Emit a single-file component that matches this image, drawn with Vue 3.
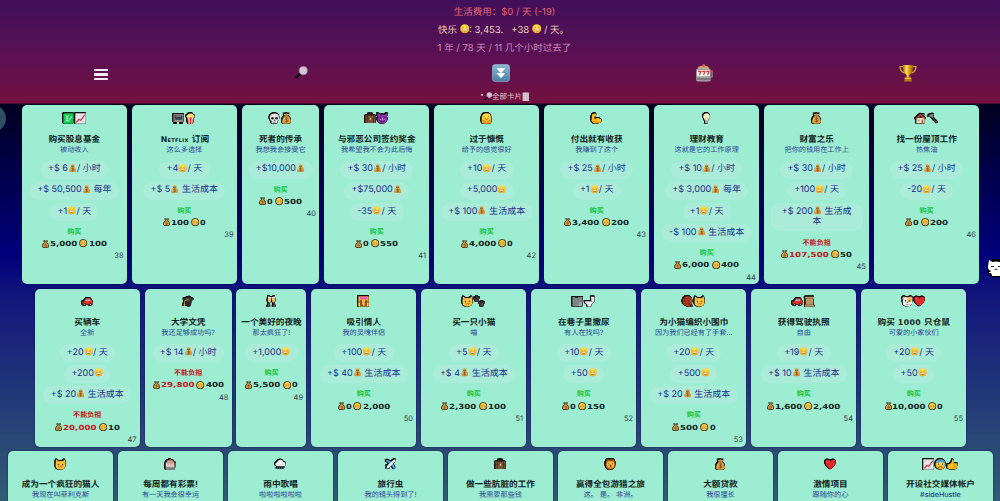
<script setup>
const B = '{bag}'
const S = '{smile}'

const rows = [
  [
    { n: 38, icons: ['yen', 'chart'], title: '购买股息基金', sub: '被动收入', fx: [`+$ 6${B}/ 小时`, `+$ 50,500${B} 每年`, `+1${S}/ 天`], cash: '5,000', joy: '100' },
    { n: 39, icons: ['tv', 'popcorn'], title: 'Netflix 订阅', sub: '这么多选择', fx: [`+4${S}/ 天`, `+$ 5${B} 生活成本`], cash: '100', joy: '0' },
    { n: 40, w: 77.7, icons: ['skull', 'bag'], title: '死者的传承', sub: '我想我会接受它', fx: [`+$10,000${B}`], cash: '0', joy: '500' },
    { n: 41, icons: ['briefcase', 'devil'], title: '与邪恶公司签约奖金', sub: '我希望我不会为此后悔', fx: [`+$ 30${B}/ 小时`, `+$75,000${B}`, `-35${S}/ 天`], cash: '0', joy: '550' },
    { n: 42, icons: ['hug'], title: '过于慷慨', sub: '给予的感觉很好', fx: [`+10${S}/ 天`, `+5,000${S}`, `+$ 100${B} 生活成本`], cash: '4,000', joy: '0' },
    { n: 43, icons: ['muscle'], title: '付出就有收获', sub: '我赚到了这个', fx: [`+$ 25${B}/ 小时`, `+1${S}/ 天`], cash: '3,400', joy: '200' },
    { n: 44, icons: ['bulb'], title: '理财教育', sub: '这就是它的工作原理', fx: [`+$ 10${B}/ 小时`, `+$ 3,000${B} 每年`, `+1${S}/ 天`, `-$ 100${B} 生活成本`], cash: '6,000', joy: '400' },
    { n: 45, icons: ['bag'], title: '财富之乐', sub: '把你的钱用在工作上', fx: [`+$ 30${B}/ 小时`, `+100${S}/ 天`, `+$ 200${B} 生活成\n本`], cash: '107,500', joy: '50', poor: true },
    { n: 46, icons: ['house', 'hammer'], title: '找一份屋顶工作', sub: '热焦油', fx: [`+$ 25${B}/ 小时`, `-20${S}/ 天`], cash: '0', joy: '200' }
  ],
  [
    { n: 47, icons: ['car'], title: '买辆车', sub: '全新', fx: [`+20${S}/ 天`, `+200${S}`, `+$ 20${B} 生活成本`], cash: '20,000', joy: '10', poor: true },
    { n: 48, w: 87.2, icons: ['gradcap'], title: '大学文凭', sub: '我还足够成功吗?', fx: [`+$ 14${B}/ 小时`], cash: '29,800', joy: '400', poor: true },
    { n: 49, w: 70, icons: ['glasses'], title: '一个美好的夜晚', sub: '那太疯狂了!', fx: [`+1,000${S}`], cash: '5,500', joy: '0' },
    { n: 50, icons: ['couple'], title: '吸引情人', sub: '我的灵魂伴侣', fx: [`+100${S}/ 天`, `+$ 40${B} 生活成本`], cash: '0', joy: '2,000' },
    { n: 51, icons: ['cat', 'paws'], title: '买一只小猫', sub: '喵', fx: [`+5${S}/ 天`, `+$ 4${B} 生活成本`], cash: '2,300', joy: '100' },
    { n: 52, icons: ['alley', 'toilet'], title: '在巷子里撒尿', sub: '有人在找吗?', fx: [`+10${S}/ 天`, `+50${S}`], cash: '0', joy: '150' },
    { n: 53, icons: ['yarn', 'cat'], title: '为小猫编织小围巾', sub: '因为我们已经有了手套...', fx: [`+20${S}/ 天`, `+500${S}`, `+$ 20${B} 生活成本`], cash: '500', joy: '0' },
    { n: 54, icons: ['car', 'scroll'], title: '获得驾驶执照', sub: '自由', fx: [`+19${S}/ 天`, `+$ 10${B} 生活成本`], cash: '1,600', joy: '2,400' },
    { n: 55, icons: ['hamster', 'heart'], title: '购买 1000 只仓鼠', sub: '可爱的小家伙们', fx: [`+20${S}/ 天`, `+50${S}`], cash: '10,000', joy: '0' }
  ],
  [
    { n: 56, icons: ['cat'], title: '成为一个疯狂的猫人', sub: '我现在叫菲利克斯' },
    { n: 57, icons: ['slots'], title: '每周都有彩票!', sub: '有一天我会很幸运' },
    { n: 58, icons: ['rain'], title: '雨中歌唱', sub: '啦啦啦啦啦啦' },
    { n: 59, icons: ['plane'], title: '旅行虫', sub: '我的镜头得到了!' },
    { n: 60, icons: ['briefcase'], title: '做一些肮脏的工作', sub: '我需要那些钱' },
    { n: 61, icons: ['lion'], title: '赢得全包游猎之旅', sub: '这。 是。 非洲。' },
    { n: 62, icons: ['bag'], title: '大额贷款', sub: '我很擅长' },
    { n: 63, icons: ['heart'], title: '激情项目', sub: '跟随你的心' },
    { n: 64, icons: ['chart', 'worried', 'thumb'], title: '开设社交媒体帐户', sub: '#sideHustle' }
  ]
]

// Splits "+4{smile}/ 天" into text and icon parts
const parts = (s) => s.split(/(\{\w+\})/).filter(Boolean).map((p) =>
  p[0] === '{' ? { icon: p.slice(1, -1) } : { text: p })

// Splits a title so latin words and numbers can use the wide display face
const words = (s) => s.split(/([A-Za-z]+|\d+)/).filter(Boolean).map((t) => ({ t, wide: /^[A-Za-z\d]/.test(t) }))

const numWidth = (s) => [...s].reduce((w, c) => w + (c === ',' ? 3.1 : 6.2), 0) - 0.5
</script>

<template>
  <div class="page">
    <svg class="defs" width="0" height="0" aria-hidden="true">
      <defs>
        <radialGradient id="gFace" cx=".5" cy=".3" r=".75">
          <stop offset="0" stop-color="#ffe95a" /><stop offset=".6" stop-color="#fdc52c" /><stop offset="1" stop-color="#e8901a" />
        </radialGradient>
        <linearGradient id="gGold" x1="0" x2="1" y1="0" y2="0">
          <stop offset="0" stop-color="#a86a08" /><stop offset=".35" stop-color="#ffdf57" /><stop offset=".65" stop-color="#d79a12" /><stop offset="1" stop-color="#8d5606" />
        </linearGradient>
        <linearGradient id="gBlue" x1="0" x2="0" y1="0" y2="1">
          <stop offset="0" stop-color="#8cbbd3" /><stop offset="1" stop-color="#477fa6" />
        </linearGradient>

        <symbol id="i-smile" viewBox="0 0 16 16">
          <circle cx="8" cy="8" r="7.7" fill="url(#gFace)" />
          <path d="M4.2 6.2q1-1.500 2 0M9.8 6.2q1-1.500 2 0" fill="none" stroke="#7b4a12" stroke-width="1" />
          <path d="M3.400 8.600h9.200q-.8 4.200-4.600 4.200t-4.600-4.200z" fill="#a8702a" /><path d="M4.200 8.900h7.600l-.6 1.900H4.800z" fill="#fff" />
        </symbol>
        <symbol id="i-bag" viewBox="0 0 16 16">
          <path d="M4 1.200l2.200.3L8 .6l1.800.9 2.400-.3-1.500 3.300q3.900 3.300 3.900 7.500 0 3.600-3 3.600H4.400q-3 0-3-3.600 0-4.200 3.900-7.500z" fill="#d29a45" />
          <path d="M5 4.500h6" stroke="#7b511a" stroke-width="1.300" />
          <path d="M10 8.200Q8.300 7 6.900 8q-1 1.500 1.200 2 2.200.7 1.300 2.200-1.200 1.200-3.200 0M8.100 6.600v7.200" fill="none" stroke="#68430f" stroke-width=".9" />
          <path d="M3.300 11.500q.2-2.800 2-4.600" fill="none" stroke="#f2cd80" stroke-width="1.100" />
        </symbol>
        <symbol id="c-smile" viewBox="0 0 18 18">
          <circle cx="9" cy="9" r="8" fill="#f7bd33" stroke="#1d1608" stroke-width="1.700" />
          <path d="M4 5.500Q9 1.500 14 5.500" fill="none" stroke="#ffe36a" stroke-width="1.600" />
          <path d="M5.500 8.300h1.700M10.800 8.300h1.700" stroke="#7b4a12" stroke-width="1.200" /><path d="M5 11h8q-1 2.700-4 2.700T5 11z" fill="#fff" stroke="#9a6520" stroke-width=".8" />
        </symbol>
        <symbol id="c-bag" viewBox="0 0 16 18">
          <path d="M3.800 1.500L8 2.300l4.200-.8-1.400 3.800q4.200 4 4.200 7.700 0 4-3 4H4q-3 0-3-4 0-3.700 4.200-7.700z" fill="#d0963f" stroke="#1d1608" stroke-width="1.700" />
          <path d="M10 9.200Q8.300 8.200 6.900 9.200q-1 1.300 1.200 1.900 2.200.7 1.300 2.200-1.200 1.100-3.200 0" fill="none" stroke="#56370b" stroke-width="1.100" />
        </symbol>
        <symbol id="i-yen" viewBox="0 0 16 16">
          <rect x=".5" y=".5" width="15" height="15" rx="2" fill="#10c950" />
          <path d="M3.500 3l2.500 3 2.600-3M6 6v4M4 7.800h4" fill="none" stroke="#d9ffe4" stroke-width="1.200" />
          <path d="M2.500 13l3-2.500 2.500 1.500 5-7.500" fill="none" stroke="#fff" stroke-width="1.200" />
        </symbol>
        <symbol id="i-chart" viewBox="0 0 16 16">
          <rect x=".5" y=".5" width="15" height="15" fill="#eceef1" />
          <path d="M4 1v14M8 1v14M12 1v14M1 4h14M1 8h14M1 12h14" stroke="#c6d0d8" stroke-width=".7" />
          <path d="M2 13.500l3.500-4 3 1L14 2.500" fill="none" stroke="#d6282e" stroke-width="1.700" />
        </symbol>
        <symbol id="i-tv" viewBox="0 0 16 16">
          <rect x=".5" y="1.500" width="15" height="11.500" rx="1" fill="#8d7b6f" />
          <rect x="2.500" y="3.200" width="11" height="6.700" rx="1.200" fill="#35444e" />
          <path d="M4 4.500h8" stroke="#b0c3c8" /><path d="M3 11.500h10" stroke="#c3b4a3" stroke-width=".9" /><path d="M2.500 13v2h3M13.500 13v2h-3" fill="none" stroke="#2b2520" stroke-width="1.300" />
        </symbol>
        <symbol id="i-popcorn" viewBox="0 0 16 16">
          <path d="M2.500 5.500L4.500 15.500h7l2-10z" fill="#e73336" /><path d="M5.400 6l.8 9.500M10.600 6l-.8 9.500" stroke="#fff" stroke-width="1.500" />
          <path d="M2 5.500Q2 2.500 4.500 2.600 5.500.2 8 1q3-1 3.600 1.600Q14 2.600 14 5.500 11 7.600 8 6.200 5 7.600 2 5.500z" fill="#ffe27b" />
        </symbol>
        <symbol id="i-skull" viewBox="0 0 16 16">
          <path d="M8 .6c4.400 0 7 2.700 7 6.300 0 2.400-1.100 3.700-2.600 4.500L12 15H4l-.4-3.600C2.100 10.600 1 9.300 1 6.900 1 3.300 3.600.6 8 .6z" fill="#e7e7e5" />
          <ellipse cx="5" cy="7.600" rx="2" ry="1.900" fill="#252525" /><ellipse cx="11" cy="7.600" rx="2" ry="1.900" fill="#252525" />
          <path d="M8 9.300l-1 1.700h2zM6.200 12.500V15M8 12.500V15M9.800 12.500V15" fill="#252525" stroke="#333" stroke-width=".6" />
        </symbol>
        <symbol id="i-briefcase" viewBox="0 0 16 16">
          <path d="M5.500 4V1.700h5V4" fill="none" stroke="#30231a" stroke-width="1.500" /><rect x=".6" y="3.700" width="14.800" height="11" rx="1.200" fill="#785339" />
          <path d="M1 8.200h14M3.500 4v10.500M12.500 4v10.500" stroke="#463020" stroke-width="1" /><rect x="6.900" y="7" width="2.200" height="2.800" fill="#efcf72" />
        </symbol>
        <symbol id="i-devil" viewBox="0 0 16 16">
          <path d="M.8.500q3 .2 3.600 2.400 3.500-1.800 7.200 0Q12.200.700 15.200.500q.8 3-1 4.800.9 1.700.9 3.500c0 3.800-3.100 6.600-7.100 6.600S.900 12.600.900 8.800q0-1.800.9-3.500Q0 3.500.8.500z" fill="#9432b2" />
          <path d="M3.500 6.200l3 1.500M12.500 6.200l-3 1.500M4.500 11.500Q8 14 11.500 11.500" fill="none" stroke="#371043" stroke-width="1.300" /><path d="M5.200 8.700v1M10.800 8.700v1M8 7v3.500" stroke="#f0ccff" stroke-width="1" />
        </symbol>
        <symbol id="i-hug" viewBox="0 0 16 16">
          <path d="M8 .5q7 0 7 7.500v5q-.5 2.500-3 2.500H4q-2.500 0-3-2.500V8Q1 .5 8 .5z" fill="url(#gFace)" />
          <path d="M4.500 5.700q.9-1 1.800 0M9.700 5.700q.9-1 1.800 0M5.500 8q2.500 2.300 5 0" fill="none" stroke="#653b0b" stroke-width="1" />
          <path d="M2 10.500l4.500 1-.5 3M14 10.500l-4.500 1 .5 3" fill="none" stroke="#b06c14" stroke-width=".8" />
        </symbol>
        <symbol id="i-muscle" viewBox="0 0 16 16">
          <path d="M2 1.300L6.200.700l1.600 2-1.500 2.500-1.500-.2L5.500 9q3.200-2.500 6.300-1.500 3.900 1.500 3.500 4.600-.4 2.700-4.300 2.900l-7 .1L.800 12Q.300 6 2 1.300z" fill="#ffb91e" /><path d="M5.500 9l1.800 2M3 12.500q5 1.500 9 .7" fill="none" stroke="#b86f0c" stroke-width=".9" />
        </symbol>
        <symbol id="i-bulb" viewBox="0 0 16 16">
          <path d="M8 .5c3 0 4.800 2 4.800 4.700 0 2.500-2.300 3.500-2.500 6H5.700c-.2-2.500-2.500-3.500-2.500-6C3.200 2.500 5 .5 8 .5z" fill="#fff8cf" /><path d="M6.500 11V6.500L8 7.500l1.500-1V11" fill="none" stroke="#ebbd3e" stroke-width=".8" /><path d="M5.800 11.300h4.400l-.5 4H6.300z" fill="#a8a8a0" />
        </symbol>
        <symbol id="i-house" viewBox="0 0 16 16">
          <path d="M2 7h12v8H2z" fill="#f7e6c6" /><path d="M.300 8.200L8 1l7.700 7.200-1.500 1.200L8 4 1.800 9.400z" fill="#cf4734" /><path d="M11 1.500h2.300v3.300L11 3z" fill="#8a4a34" /><path d="M3.700 9.500h3V12h-3z" fill="#5aa5d8" /><path d="M9.500 9.500H12V15H9.500z" fill="#a8633a" />
        </symbol>
        <symbol id="i-hammer" viewBox="0 0 16 16">
          <path d="M7 6l7.800 8.200" stroke="#4b382c" stroke-width="1.700" /><path d="M1 5.500Q3 1.500 8 1l2 1.300L8.800 3.500l1.200 1.200L7.300 7.200 5.500 5.500 3 4.800z" fill="#7b868d" />
        </symbol>
        <symbol id="i-car" viewBox="0 0 16 16">
          <path d="M.500 8.500L3.200 7.500 5.200 4.200Q6 3.200 8 3.200h2.500q1.600 0 2.500 1.300l1.300 2.800 1.300 1.700-.2 3.500H.800z" fill="#e4332c" /><path d="M4.700 7.200L6.200 4.700h2v2.500zM9.200 4.700h1.600l1.300 2.500H9.200z" fill="#9dd1e4" /><circle cx="4" cy="12.200" r="1.900" fill="#222" /><circle cx="12" cy="12.200" r="1.900" fill="#222" /><circle cx="4" cy="12.200" r=".8" fill="#ccc" /><circle cx="12" cy="12.200" r=".8" fill="#ccc" />
        </symbol>
        <symbol id="i-gradcap" viewBox="0 0 16 16">
          <path d="M4 6.500l8 1.500-.5 6q-3.500 1.800-7-.3z" fill="#2b2b2b" /><path d="M.500 4.500L9.500 1l6 4.200L8.200 9z" fill="#3b3b3b" /><path d="M8 5L2.500 6.800l-.5 5" fill="none" stroke="#e5a421" stroke-width="1.200" /><path d="M1.300 11h1.800l.2 3.500H.700z" fill="#e5a421" />
        </symbol>
        <symbol id="i-glasses" viewBox="0 0 16 16">
          <path d="M3 .8l4.600 1-.4 6.200q-1 1.500-2.500 1.200L2.500 8zM13 .8l-4.600 1 .4 6.200q1 1.500 2.500 1.200L13.500 8z" fill="#e4bd75" /><path d="M3 .8l4.600 1v2L2.900 3zM13 .8l-4.600 1v2l4.700-.8z" fill="#f7eee0" /><path d="M4.600 9L4 14.500M11.400 9l.6 5.500M2 14.800l4 .2M14 14.800l-4 .2" stroke="#80817c" stroke-width="1.200" />
        </symbol>
        <symbol id="i-couple" viewBox="0 0 16 16">
          <rect x=".5" y=".5" width="15" height="15" fill="#f6b53d" /><path d="M2 1h12l-2.500 5L8 4 5 7z" fill="#ed58b3" /><path d="M2 15V7l2.500-1.500L6.500 9 6 11l2 4zM14 15V7l-2.500-1.500L9.500 9l.5 3-1 3z" fill="#8d5118" /><path d="M8 8l1.500 4H6.500zM1 10h2v5H1zM13 10h2v5h-2z" fill="#ffdb5a" />
        </symbol>
        <symbol id="i-cat" viewBox="0 0 16 16">
          <path d="M1.500.700l4 2.500q2.500-.8 5 0l4-2.500.8 7.500q0 6.500-7.300 7T.700 8.200z" fill="#fcc43b" /><path d="M2.700 3l1.800 1.300-1.600 1.500zM13.300 3l-1.800 1.300 1.600 1.500z" fill="#e98a56" /><circle cx="5" cy="8" r="1" fill="#503006" /><circle cx="11" cy="8" r="1" fill="#503006" /><path d="M5 10.500q1.800 2 3 .2 1.200 1.800 3-.2" fill="none" stroke="#704208" stroke-width="1" />
        </symbol>
        <symbol id="i-paws" viewBox="0 0 16 16">
          <g fill="#454545"><circle cx="4.500" cy="6" r="2.600" /><circle cx="1.500" cy="3.500" r="1.300" /><circle cx="4.200" cy="1.700" r="1.300" /><circle cx="7" cy="3" r="1.300" /><circle cx="11.500" cy="12.600" r="2.700" /><circle cx="8.500" cy="10.200" r="1.300" /><circle cx="11.200" cy="8.400" r="1.300" /><circle cx="14.300" cy="9.700" r="1.300" /></g>
        </symbol>
        <symbol id="i-alley" viewBox="0 0 16 16">
          <path d="M.600 1.500h4v1h4v-1h6.800V15H.600z" fill="#7e898d" /><path d="M2 5h10M2 8h12M2 11h12" stroke="#717d81" stroke-width="1" /><path d="M10 9h4v6h-4z" fill="#a3aaac" />
        </symbol>
        <symbol id="i-toilet" viewBox="0 0 16 16">
          <path d="M10 1h5.200v7.500H11z" fill="#e9eaea" /><path d="M1 7.500h13q-.3 3.500-3.500 4.300V15.200H5v-3Q1.200 11 1 7.500z" fill="#f7f7f7" /><path d="M1.500 8h11" stroke="#a0a5a7" stroke-width="1" />
        </symbol>
        <symbol id="i-yarn" viewBox="0 0 16 16">
          <circle cx="8" cy="7.500" r="7" fill="#b84426" /><path d="M2 5q5-4 11 1M1.500 8q6-4 11.500 2M3 11.500q5-3 8.500 1M5 2q-2 5 1 11M9 1.500q-1 6 2 11.500" fill="none" stroke="#742012" stroke-width=".9" /><path d="M8 14.800h7" stroke="#ad3e23" stroke-width="1.400" />
        </symbol>
        <symbol id="i-scroll" viewBox="0 0 16 16">
          <path d="M2 1h12.500v3l-1 1v8l1.500 1v1.500H1.500V13l1-1V4L1 3z" fill="#b89463" /><path d="M2 3.500h12M2.500 12.500h11" stroke="#8a6b44" stroke-width="1" />
        </symbol>
        <symbol id="i-hamster" viewBox="0 0 16 16">
          <circle cx="3.300" cy="3.500" r="2.800" fill="#ee9ba1" /><circle cx="12.700" cy="3.500" r="2.800" fill="#ee9ba1" /><path d="M8 1.500q6 0 6.800 6Q15 15 8 15T1.200 7.500Q2 1.500 8 1.500z" fill="#f4efe5" /><path d="M8 1.500q6 0 6.800 6L8 9z" fill="#eebb5a" /><circle cx="5" cy="7" r="1.100" fill="#222" /><circle cx="11" cy="7" r="1.100" fill="#222" /><path d="M7 9h2l-1 1.200zM6 11.700q2 1.500 4 0" fill="#d8586b" stroke="#8f3b45" stroke-width=".6" />
        </symbol>
        <symbol id="i-heart" viewBox="0 0 16 16">
          <path d="M8 15Q.500 9.300.500 5 .500 1.200 4.200 1.200 6.800 1.200 8 3.700 9.200 1.200 11.800 1.200q3.700 0 3.700 3.800Q15.500 9.300 8 15z" fill="#e62a2a" /><path d="M2.700 4.800q.2-1.500 1.600-1.600" fill="none" stroke="#ff8b80" stroke-width="1" />
        </symbol>
        <symbol id="i-slots" viewBox="0 0 16 16">
          <path d="M2 5q0-3.300 5-3.500V.300h1.500v1.200q4.500.3 4.500 3.500z" fill="#c7a681" /><circle cx="7.700" cy="1.400" r="1.100" fill="#d84942" /><rect x="1" y="4.500" width="13" height="11" rx="1.300" fill="#a49f9f" /><rect x="1.800" y="5.800" width="11.300" height="5" fill="#fff" /><path d="M2.800 6.800h2.300L4 10M6.400 6.800h2.300L7.600 10M10 6.800h2.300L11.200 10" fill="none" stroke="#e02c2c" stroke-width="1" /><path d="M1.500 13.300h12" stroke="#696568" stroke-width="1.200" /><path d="M14 11.500h1.200V7" fill="none" stroke="#9a979b" stroke-width="1" /><circle cx="15" cy="6.400" r="1" fill="#e03b3b" />
        </symbol>
        <symbol id="i-rain" viewBox="0 0 16 16">
          <path d="M3.500 10.500Q.500 10 .600 7.300.800 5 3.200 4.800 4 1 7.800 1q3.400 0 4.400 3.300 3.200.2 3.200 3.200t-3.200 3z" fill="#ecf0f3" /><path d="M4 12l-.8 1.700M7 12l-1 2.500M10 12l-1 2.500M13 12l-.8 1.700" stroke="#3b8bc4" stroke-width="1.300" />
        </symbol>
        <symbol id="i-plane" viewBox="0 0 16 16">
          <path d="M3 1l7 3.500L8.500 8 1 3zM15 13L11.500 6 8 7.500l5 7.500zM1.500 9.500l3 .5-.500 2zM6.500 14.500L6 11.500 4 12z" fill="#449ed4" /><path d="M15.200.800q-2-.6-4 1.300L3.500 9.500 2 13.900 6.500 12.500l7.400-7.700q1.900-2 1.300-4z" fill="#e8eef2" />
        </symbol>
        <symbol id="i-lion" viewBox="0 0 16 16">
          <path d="M3 .800h10l2.300 5-.8 6L11 15.300H5L1.500 11.800l-.8-6z" fill="#b55318" /><path d="M4 3.500h8l1.500 4-1.500 4.500-4 2-4-2-1.500-4.500z" fill="#ffc847" /><circle cx="5.500" cy="7" r=".9" fill="#422307" /><circle cx="10.500" cy="7" r=".9" fill="#422307" /><path d="M6.500 8.700h3L8 10.500zM5.500 12q2.500-2 5 0" fill="#713410" stroke="#713410" stroke-width=".6" />
        </symbol>
        <symbol id="i-worried" viewBox="0 0 16 16">
          <circle cx="8" cy="8" r="7.300" fill="url(#gFace)" /><path d="M1 6Q2 .7 8 .7T15 6Q8 3.500 1 6z" fill="#4d9bdd" /><circle cx="5.200" cy="7.500" r="1" fill="#5d3209" /><circle cx="10.800" cy="7.500" r="1" fill="#5d3209" /><path d="M5 12q3-2.500 6 0" fill="none" stroke="#5d3209" stroke-width="1.200" /><path d="M13.500 6.500q2.500 3 .5 4.500-2.200-.5-.5-4.500z" fill="#60b5ef" />
        </symbol>
        <symbol id="i-thumb" viewBox="0 0 16 16">
          <path d="M.700 7.500H4l3-3.500.5-3.300Q10.200.500 10 3.500L9.400 6h5q1.500.5.9 2l-1.300 5.800Q13.500 15 11.500 15H5l-4.300-1.500z" fill="#ffc020" /><path d="M9.500 8.500h5M9.500 11h4.500M9 13h4.300" stroke="#c27a0b" stroke-width=".8" />
        </symbol>
        <symbol id="i-trophy" viewBox="0 0 16 16">
          <path d="M4 2.300H1Q.8 7 5 8M12 2.300h3Q15.200 7 11 8" fill="none" stroke="#d99d1b" stroke-width="1.200" /><path d="M3.500.800h9Q12.800 8 9.200 9.600V12H6.800V9.600Q3.200 8 3.500.800z" fill="url(#gGold)" /><path d="M5.500 11.800h5l1 3.700h-7z" fill="#b9780c" /><path d="M5 12.700h6" stroke="#ffe06a" stroke-width=".8" />
        </symbol>
        <symbol id="i-search" viewBox="0 0 16 16">
          <path d="M7 9L1.300 14.700" stroke="#0c0c10" stroke-width="3" /><circle cx="10.200" cy="5.700" r="5" fill="#d3c6d4" stroke="#9a8a9a" stroke-width=".7" />
        </symbol>
        <symbol id="i-note" viewBox="0 0 14 18">
          <path d="M1 1h12v16H1z" fill="#d9ced3" /><path d="M2 5h10M2 9h10M2 13h10" stroke="#a08e99" stroke-width=".8" />
        </symbol>
      </defs>
    </svg>

    <header class="top">
      <p class="stat cost">生活费用：$0 / 天 (-19)</p>
      <p class="stat joy">快乐 <svg class="emo"><use href="#i-smile" /></svg>: 3,453. &nbsp; +38 <svg class="emo"><use href="#i-smile" /></svg> / 天。</p>
      <p class="stat time">1 年 / 78 天 / 11 几个小时过去了</p>
      <nav class="tabs">
        <span class="tab"><i class="burger"><b></b><b></b><b></b></i></span>
        <span class="tab"><svg class="t-search"><use href="#i-search" /></svg></span>
        <span class="tab">
          <svg class="t-down" viewBox="0 0 18 18">
            <rect x=".4" y=".4" width="17.200" height="17.200" rx="3" fill="url(#gBlue)" stroke="#a3c7d8" stroke-width=".6" />
            <path d="M4.500 4.300h9L9 9.200zM4.500 9h9L9 14.200z" fill="#fff" />
          </svg>
        </span>
        <span class="tab"><svg class="t-big"><use href="#i-slots" /></svg></span>
        <span class="tab"><svg class="t-big"><use href="#i-trophy" /></svg></span>
      </nav>
      <p class="caption"><i class="dot"></i><svg class="c-search"><use href="#i-search" /></svg>全部卡片<svg class="c-note"><use href="#i-note" /></svg></p>
    </header>

    <main class="deck">
      <section v-for="(row, r) in rows" :key="r" class="row">
        <article v-for="c in row" :key="c.n" class="card" :style="{ width: (c.w || 105.3) + 'px' }">
          <div class="icons"><svg v-for="i in c.icons" :key="i" class="ico"><use :href="'#i-' + i" /></svg></div>
          <h3><span v-for="(w, k) in words(c.title)" :key="k" :class="{ wide: w.wide }">{{ w.t }}</span></h3>
          <p class="sub" :class="{ latin: c.sub[0] === '#' }">{{ c.sub }}</p>
          <template v-if="c.fx">
            <ul class="chips">
              <li v-for="f in c.fx" :key="f" :class="{ full: f.includes('\n') }"><template v-for="(p, k) in parts(f)" :key="k"><svg v-if="p.icon" class="mini"><use :href="'#i-' + p.icon" /></svg><template v-else>{{ p.text }}</template></template></li>
            </ul>
            <p class="buy" :class="{ poor: c.poor }">{{ c.poor ? '不能负担' : '购买' }}</p>
            <div class="price">
              <svg class="coin-bag"><use href="#c-bag" /></svg>
              <svg class="num" :class="{ poor: c.poor }" :width="numWidth(c.cash)" height="9"><text x="0" y="7.1" :textLength="numWidth(c.cash)" lengthAdjust="spacingAndGlyphs">{{ c.cash }}</text></svg>
              <svg class="coin-joy"><use href="#c-smile" /></svg>
              <svg class="num" :width="numWidth(c.joy)" height="9"><text x="0" y="7.1" :textLength="numWidth(c.joy)" lengthAdjust="spacingAndGlyphs">{{ c.joy }}</text></svg>
            </div>
            <p class="no">{{ c.n }}</p>
          </template>
        </article>
      </section>
    </main>

    <span class="bubble"></span>
    <svg class="octo" viewBox="0 0 20 20">
      <circle cx="10" cy="10" r="9.500" fill="#000" />
      <path d="M3 2L6.500 4Q10 3 13.500 4L17 2l.8 5q1.500 5.500-3.800 6.500l.8 4.500H6l-.5-2.500L2.500 14.500l3-1.500Q1 12 2.200 7z" fill="#fff" />
      <path d="M5 8.500h3M12 8.500h3M8.500 11.300h3" stroke="#222" stroke-width="1.100" />
    </svg>
  </div>
</template>

<style>
html, body { margin: 0; overflow: hidden; background: #00001c; }
</style>

<style scoped>
.page {
  position: relative;
  height: 501px;
  overflow: hidden;
  background: linear-gradient(#000018 90px, #00007c 255px, #12187b 300px, #335c74 501px);
  font-family: Inter, "Noto Sans CJK SC", sans-serif;
  text-rendering: geometricPrecision;
}
p, h3, ul { margin: 0; padding: 0; }
.defs { position: absolute; }

.top {
  height: 103.500px;
  box-sizing: border-box;
  padding-top: 3.600px;
  overflow: hidden;
  background: linear-gradient(#400f5b, #5a1152 55%, #74103f);
  border-bottom: 1px solid #4a0a2c;
  text-align: center;
}
.stat { height: 18.200px; line-height: 18.200px; font-size: 9.500px; white-space: nowrap; padding-left: 9px; font-weight: 400; }
.cost { color: #e26470; }
.joy { color: #e8ccb6; padding-left: 7px; }
.time { color: #d084b6; }
.emo { width: 9.500px; height: 9.500px; vertical-align: -1px; }

.tabs { display: grid; grid-template-columns: 201px 200px 200px 205px 203px; height: 32.500px; }
.tab { display: flex; align-items: center; justify-content: center; }
.burger { display: flex; flex-direction: column; gap: 2.600px; width: 14px; }
.burger b { height: 2.200px; background: #f3eaf2; border-radius: .5px; }
.t-search { width: 13px; height: 13px; margin-bottom: 3px; }
.t-down { width: 18px; height: 18px; margin-bottom: 3px; }
.t-big { width: 18px; height: 18px; margin-bottom: 3px; }

.caption { display: flex; align-items: center; justify-content: center; height: 12px; padding-left: 10px; font-size: 7.500px; line-height: 12px; color: #dcc6d1; }
.dot { width: 2px; height: 2px; border-radius: 50%; background: #dcc6d1; margin: 0 1px 3px 0; }
.c-search { width: 8.500px; height: 8.500px; }
.c-note { width: 7.500px; height: 9.500px; }

.deck { padding-top: 1.900px; display: flex; flex-direction: column; gap: 4.700px; width: 1001px; }
.row { display: flex; justify-content: center; gap: 4.700px; margin: 0 -5px; }
.card {
  flex: none;
  box-sizing: border-box;
  padding: 6.900px 3.400px 2.700px;
  min-height: 80px;
  background: #9cedd1;
  border-radius: 5px;
  box-shadow: 0 0 2px rgba(0, 0, 20, .6);
  text-align: center;
}
.icons { display: flex; justify-content: center; gap: .6px; height: 12px; align-items: center; }
.ico {
  width: 11px; height: 11px; overflow: visible;
  filter: drop-shadow(.5px 0 0 #111) drop-shadow(-.5px 0 0 #111) drop-shadow(0 .5px 0 #111) drop-shadow(0 -.5px 0 #111);
}
h3 { margin: 10.300px -3px 0; font-size: 8.650px; line-height: 10px; height: 10px; font-weight: 700; color: #12241f; white-space: nowrap; }
h3 .wide { font-family: "DejaVu Sans", sans-serif; font-variant: small-caps; font-size: 7.800px; letter-spacing: .35px; margin: 0 1px; }
.sub { font-size: 7.150px; line-height: 9px; height: 9px; color: #2d4495; white-space: nowrap; }
.latin { font-weight: 500; color: #26379a; }

.chips { list-style: none; margin-top: 7.200px; display: flex; flex-direction: column; align-items: center; gap: 3.300px; }
.chips li {
  box-sizing: border-box;
  height: 17.800px;
  padding: 3.600px 7.300px;
  border-radius: 9px;
  background: rgba(190, 235, 226, .45);
  font-size: 9px;
  line-height: 10.600px;
  color: #202e8c;
  white-space: pre;
}
.chips li.full { width: 92px; height: 28.400px; }
.mini { width: 9.200px; height: 8.600px; vertical-align: -1px; margin-top: -2px; }

.buy { margin-top: 6.200px; font-size: 7.100px; line-height: 9px; height: 9px; font-weight: 600; color: #18c440; }
.buy.poor { color: #c4181c; }
.price { display: flex; justify-content: center; align-items: center; height: 9px; margin-top: 3.200px; gap: .8px; }
.coin-bag { flex: none; width: 7.200px; height: 8.100px; }
.coin-joy { flex: none; width: 8.400px; height: 8.400px; margin-left: 1.200px; }
.num { flex: none; overflow: visible; }
.num text { font: 700 7px "DejaVu Sans", sans-serif; fill: #17241f; text-rendering: geometricPrecision; }
.num.poor text { fill: #c4181c; }
.no { margin-top: 3.300px; height: 9px; line-height: 9px; font-size: 7.500px; text-align: right; color: #3a3c46; }

.bubble { position: absolute; left: -21px; top: 105px; width: 27px; height: 27px; border-radius: 50%; background: #2d5063; }
.octo { position: absolute; left: 985.500px; top: 258px; width: 20px; height: 20px; }
</style>
